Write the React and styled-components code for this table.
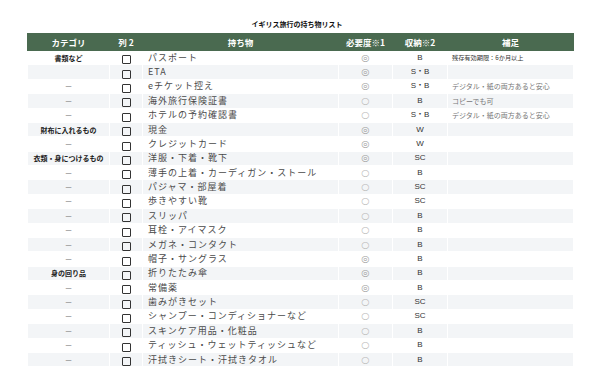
import React from "react"
import styled, { createGlobalStyle } from "styled-components"

const GlobalStyle = createGlobalStyle`
  html, body {
    margin: 0;
    padding: 0;
    background: #fff;
  }
  body {
    font-family: "Noto Sans CJK JP", "Noto Sans", sans-serif;
  }
`

const Page = styled.div`
  width: 595px;
  height: 369px;
  overflow: hidden;
  padding: 20px 28px 0 27px;
  box-sizing: border-box;
`

const Title = styled.h1`
  margin: 0 0 5px;
  height: 8px;
  line-height: 8px;
  font-size: 7px;
  font-weight: 700;
  color: #111;
  text-align: center;
`

const Table = styled.table`
  width: 540px;
  table-layout: fixed;
  border-collapse: collapse;
  border-left: 1px solid #6f8573;
  border-right: 1px solid #6f8573;
`

const HeadRow = styled.tr`
  height: 17px;
  background: #4a6a50;
`

const HeadCell = styled.th`
  width: ${p => p.$w}px;
  padding: 0;
  font-size: 8.5px;
  font-weight: 700;
  color: #fff;
  text-align: center;
  border: 1px solid #4a6a50;
`

const Row = styled.tr`
  height: 14.38px;
  background: ${p => (p.$alt ? "#f3f5f7" : "#fff")};
`

const Cell = styled.td`
  padding: 0;
  border: 1px solid #fff;
  text-align: center;
  line-height: 12px;
  white-space: nowrap;
  overflow: hidden;
`

const CategoryCell = styled(Cell)`
  font-size: 7px;
  font-weight: 700;
  color: #222;
`

const Dash = styled.span`
  font-family: "Liberation Sans", sans-serif;
  font-size: 10px;
  font-weight: 400;
  color: #999;
`

const Box = styled.span`
  display: inline-block;
  width: 7px;
  height: 7px;
  border: 1.4px solid #333;
  border-radius: 1px;
  vertical-align: middle;
`

const ItemCell = styled(Cell)`
  text-align: left;
  padding-left: 5px;
  font-size: 9px;
  letter-spacing: 1px;
  color: #4a4a4a;
`

const MarkCell = styled(Cell)`
  font-family: "DejaVu Sans", sans-serif;
  font-size: 9.5px;
  color: ${p => (p.$double ? "#9d9d9d" : "#b8b8b8")};
`

const StoreCell = styled(Cell)`
  font-family: "Liberation Sans", "Noto Sans CJK JP", sans-serif;
  font-size: 8px;
  color: #333;
`

const NoteCell = styled(Cell)`
  text-align: left;
  padding-left: 4px;
  font-size: ${p => (p.$small ? 6.2 : 7)}px;
  color: ${p => (p.$small ? "#333" : "#777")};
`

const columns = [
  ["カテゴリ", 81],
  ["列 2", 32],
  ["持ち物", 195],
  ["必要度※1", 53],
  ["収納※2", 54],
  ["補足", 125],
]

const rows = [
  ["書類など", "パスポート", 2, "B", "残存有効期限：6か月以上", true],
  ["", "ETA", 2, "S・B", ""],
  ["-", "eチケット控え", 2, "S・B", "デジタル・紙の両方あると安心"],
  ["-", "海外旅行保険証書", 1, "B", "コピーでも可"],
  ["-", "ホテルの予約確認書", 1, "S・B", "デジタル・紙の両方あると安心"],
  ["財布に入れるもの", "現金", 2, "W", ""],
  ["-", "クレジットカード", 2, "W", ""],
  ["衣類・身につけるもの", "洋服・下着・靴下", 2, "SC", ""],
  ["-", "薄手の上着・カーディガン・ストール", 1, "B", ""],
  ["-", "パジャマ・部屋着", 1, "SC", ""],
  ["-", "歩きやすい靴", 1, "SC", ""],
  ["-", "スリッパ", 1, "B", ""],
  ["-", "耳栓・アイマスク", 1, "B", ""],
  ["-", "メガネ・コンタクト", 1, "B", ""],
  ["-", "帽子・サングラス", 2, "B", ""],
  ["身の回り品", "折りたたみ傘", 2, "B", ""],
  ["-", "常備薬", 2, "B", ""],
  ["-", "歯みがきセット", 1, "SC", ""],
  ["-", "シャンプー・コンディショナーなど", 1, "SC", ""],
  ["-", "スキンケア用品・化粧品", 1, "B", ""],
  ["-", "ティッシュ・ウェットティッシュなど", 1, "B", ""],
  ["-", "汗拭きシート・汗拭きタオル", 1, "B", ""],
]

export default function App() {
  return (
    <Page>
      <GlobalStyle />
      <Title>イギリス旅行の持ち物リスト</Title>
      <Table>
        <thead>
          <HeadRow>
            {columns.map(([label, w]) => (
              <HeadCell key={label} $w={w}>{label}</HeadCell>
            ))}
          </HeadRow>
        </thead>
        <tbody>
          {rows.map(([cat, item, need, store, note, small], i) => (
            <Row key={item} $alt={i % 2 === 1}>
              <CategoryCell>
                {cat === "-" ? <Dash>–</Dash> : cat}
              </CategoryCell>
              <Cell><Box /></Cell>
              <ItemCell>{item}</ItemCell>
              <MarkCell $double={need === 2}>{need === 2 ? "◎" : "○"}</MarkCell>
              <StoreCell>{store}</StoreCell>
              <NoteCell $small={small}>{note}</NoteCell>
            </Row>
          ))}
        </tbody>
      </Table>
    </Page>
  )
}
